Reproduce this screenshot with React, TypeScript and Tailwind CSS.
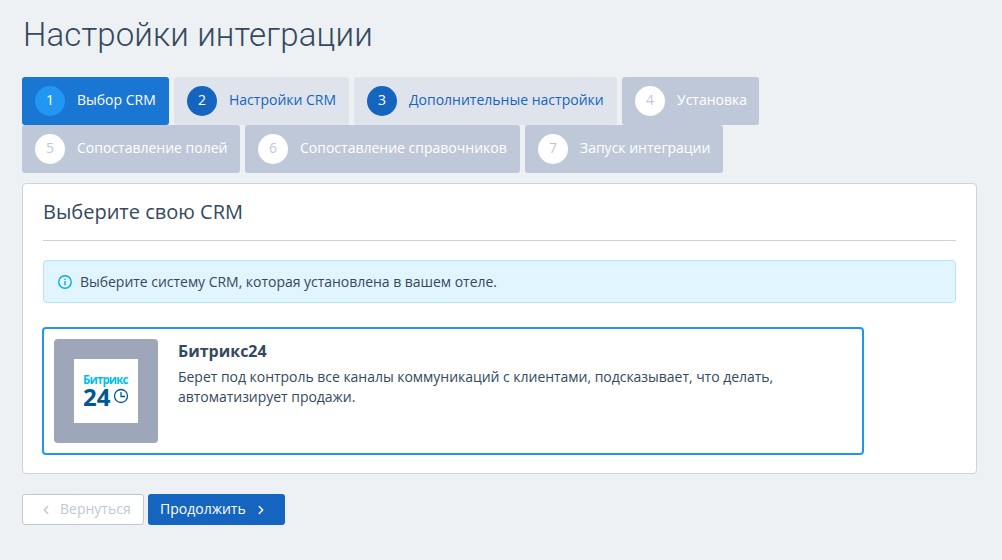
import React from 'react';
import { ChevronLeft, ChevronRight } from 'lucide-react';

type StepState = 'active' | 'available' | 'disabled';

interface Step {
  title: string;
  state: StepState;
  width: string;
}

const steps: Step[] = [
  { title: 'Выбор CRM', state: 'active', width: 'w-[147px]' },
  { title: 'Настройки CRM', state: 'available', width: 'w-[175px]' },
  { title: 'Дополнительные настройки', state: 'available', width: 'w-[263px]' },
  { title: 'Установка', state: 'disabled', width: 'w-[137px]' },
  { title: 'Сопоставление полей', state: 'disabled', width: 'w-[218px]' },
  { title: 'Сопоставление справочников', state: 'disabled', width: 'w-[275px]' },
  { title: 'Запуск интеграции', state: 'disabled', width: 'w-[198px]' },
];

const stepStyles: Record<StepState, string> = {
  active: 'bg-[#1976d2] text-white',
  available: 'bg-[#dfe3eb] text-[#1565c0]',
  disabled: 'bg-[#bfc8d9] text-white',
};

const numberStyles: Record<StepState, string> = {
  active: 'bg-[#2196f3] text-white',
  available: 'bg-[#1565c0] text-white',
  disabled: 'bg-white text-[#bfc8d9]',
};

const Steps: React.FC = () => (
  <ol className="flex flex-wrap gap-x-[5px] w-[760px]">
    {steps.map((step, index) => (
      <li
        key={step.title}
        className={`flex items-center h-12 pl-[13px] rounded-[3px] whitespace-nowrap ${step.width} ${stepStyles[step.state]}`}
      >
        <span
          className={`flex items-center justify-center shrink-0 w-[30px] h-[30px] mr-3 rounded-full pb-[3px] ${numberStyles[step.state]}`}
        >
          {index + 1}
        </span>
        <span className="pb-[2px]">{step.title}</span>
      </li>
    ))}
  </ol>
);

const InfoIcon: React.FC = () => (
  <svg width="14" height="14" viewBox="0 0 14 14" fill="none" className="shrink-0">
    <circle cx="7" cy="7" r="6.2" stroke="#03a9f4" strokeWidth="1.4" />
    <path d="M6.3 3.7h1.4v1.3H6.3zM6.3 6h1.4v4.3H6.3z" fill="#03a9f4" />
  </svg>
);

const BitrixLogo: React.FC = () => (
  <div className="w-16 h-16 pt-[15px] pl-[9px] bg-white">
    <div className="h-[11px] text-[11.5px] leading-[11px] tracking-[-0.85px] font-bold text-[#00bfec]">
      Битрикс
    </div>
    <div className="flex items-center h-6">
      <span className="w-[29px] text-[24px] leading-6 font-bold text-[#005893]">24</span>
      <svg width="16" height="16" viewBox="0 0 16 16" fill="none" stroke="#005893" strokeWidth="1.3" className="shrink-0 ml-px mb-[3px]">
        <circle cx="8" cy="8" r="6.5" />
        <path d="M8 4v4.5h4" />
      </svg>
    </div>
  </div>
);

const App: React.FC = () => {
  return (
    <main className="min-h-screen bg-[#edf1f4] pl-[22px] pr-[25px] pt-[13px] font-['Open_Sans','Noto_Sans',sans-serif] text-[14px] leading-5 text-[#34495e]">
      <h1 className="h-[64px] pl-px font-['Roboto',sans-serif] font-[350] text-[33px] leading-[44px] tracking-[0.13px]">
        Настройки интеграции
      </h1>

      <Steps />

      <section className="mt-[10px] h-[291px] px-5 bg-white border border-[#cad3e0] rounded-[4px]">
        <h2 className="h-[57px] pt-[14px] text-[20px] leading-7 border-b border-[#cad3e0]">
          Выберите свою CRM
        </h2>

        <div className="flex items-center h-[43px] mt-[19px] pl-[14px] bg-[#e1f5fe] border border-[#b3e5fc] rounded-[4px]">
          <InfoIcon />
          <p className="ml-2 tracking-[-0.03px]">Выберите систему CRM, которая установлена в вашем отеле.</p>
        </div>

        <div className="flex w-[822px] h-[128px] mt-6 -ml-px p-[10px] border-2 border-[#2196f3] rounded-[4px]">
          <div className="flex items-center justify-center shrink-0 w-[104px] h-[104px] bg-[#9da7b9] rounded-[4px]">
            <BitrixLogo />
          </div>
          <div className="ml-5 w-[640px]">
            <h3 className="mt-px text-[16px] leading-[22px] font-bold">Битрикс24</h3>
            <p className="mt-[5px] tracking-[-0.03px]">
              Берет под контроль все каналы коммуникаций с клиентами, подсказывает, что делать, автоматизирует продажи.
            </p>
          </div>
        </div>
      </section>

      <div className="flex gap-1 mt-5">
        <button className="flex items-center w-[122px] h-[31px] pl-[16px] bg-white border border-[#bfc8d9] rounded-[3px] text-[#bfc8d9]">
          <ChevronLeft size={14} strokeWidth={2.5} />
          <span className="ml-[7px] pb-px">Вернуться</span>
        </button>
        <button className="flex items-center w-[137px] h-[31px] pl-3 bg-[#1565c0] rounded-[3px] text-white">
          <span className="pb-px">Продолжить</span>
          <ChevronRight size={14} strokeWidth={2.5} className="ml-[8px]" />
        </button>
      </div>
    </main>
  );
};

export default App;
